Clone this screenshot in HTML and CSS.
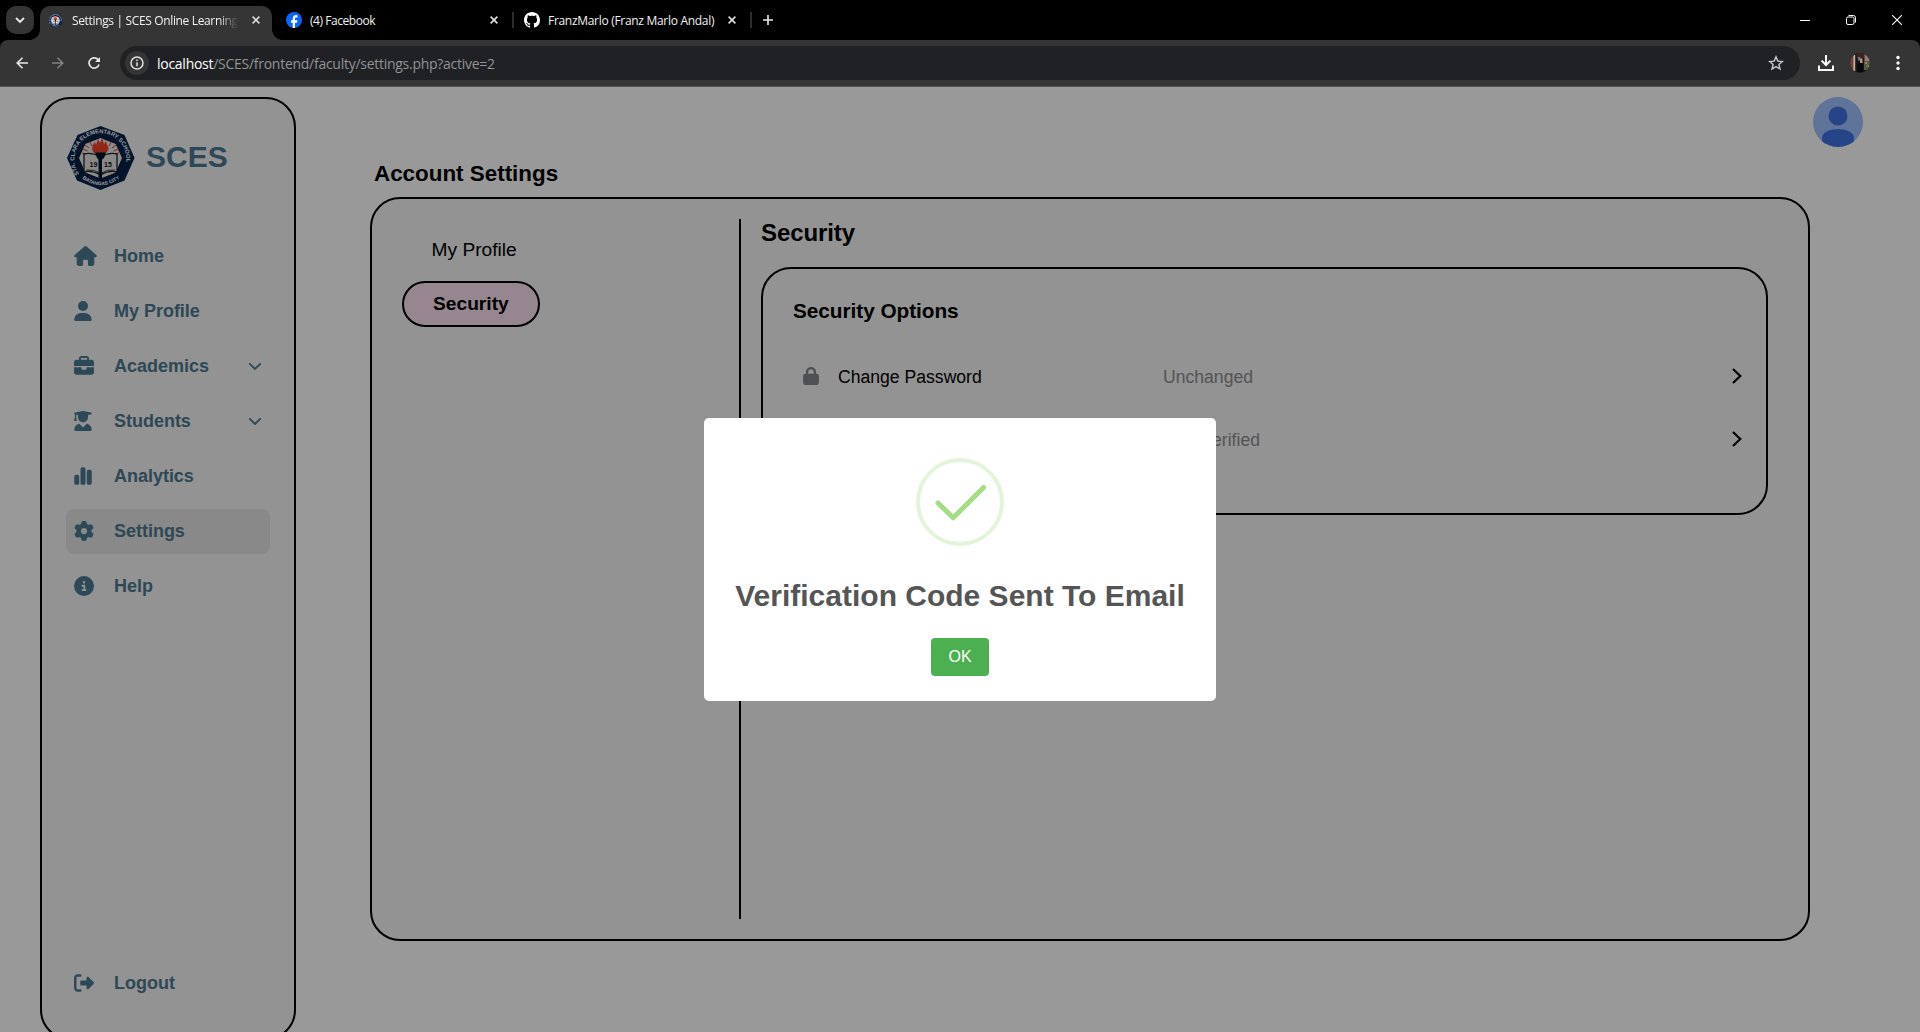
FILE: index.html
```html
<!DOCTYPE html>
<html lang="en">
<head>
<meta charset="utf-8">
<title>Settings | SCES Online Learning</title>
<link rel="stylesheet" href="styles.css">
</head>
<body>
<svg width="0" height="0" class="defs">
  <defs>
    <symbol id="close" viewBox="0 0 8 8"><path d="M.6.6l6.8 6.8M7.4.6L.6 7.4" stroke="#e3e3e3" stroke-width="1.5" fill="none"/></symbol>
    <symbol id="chev" viewBox="0 0 12 7"><path d="M.8.8L6 6 11.2.8" stroke="#4c788f" stroke-width="1.8" fill="none" stroke-linecap="round"/></symbol>
    <symbol id="next" viewBox="0 0 10 16"><path d="M1 1l7.3 7L1 15" stroke="#000" stroke-width="2.2" fill="none"/></symbol>
    <symbol id="seal" viewBox="0 0 68 64">
      <path d="M33.500 0L57.500 9 67.500 32 57.500 54.500 33.500 64 10 54.500 0 32 10.500 9z" fill="#04204a"/>
      <path d="M33.500 11.500L49 17.500 55.500 32 49 47 33.500 53 18 47 11.500 32 18 17.500z" fill="#e8e8e8" stroke="#06142b"/>
      <path d="M15 27l5 1M15.500 23l5 2M18 19l4 3M52 27l-5 1M51.500 23l-5 2M49 19l-4 3M23 16l2 4M44 16l-2 4" stroke="#e0402a" stroke-width="1"/>
      <path d="M17 28q8-2 16.500 3 8.500-5 16.500-3v18q-8-2-16.500 3-8.500-5-16.500-3z" fill="#e4e4e4" stroke="#222" stroke-width="1.300"/>
      <path d="M19 44q8-1 14.500 3.500 6.500-4.500 14.500-3.500" fill="none" stroke="#222" stroke-width=".9"/>
      <path d="M27 27c-3-4-2-8 1-11l1 3 2-6 2 4 2-5 2 6 2-3 1 4c3 3 1 6-1 8z" fill="#f04228"/>
      <path d="M28 26.500h11l-2 5.500-2 1.500V53h-3.500V33.500L30 32z" fill="#06142b"/>
      <text x="22.500" y="41" class="year">19</text><text x="37" y="41" class="year">15</text>
      <path id="arc1" d="M12 48A26 26 0 1 1 56 46" fill="none"/>
      <path id="arc2" d="M12 50Q33.500 68.500 56 50" fill="none"/>
      <text class="ring"><textPath href="#arc1">STA. CLARA ELEMENTARY SCHOOL</textPath></text>
      <text class="ring small"><textPath href="#arc2" startOffset="50%" text-anchor="middle">BATANGAS CITY</textPath></text>
    </symbol>
  </defs>
</svg>

<div class="browser">
  <div class="tabs">
    <div class="tab-search"><svg width="10" height="7" viewBox="0 0 10 7"><path d="M1 1l4 4 4-4" stroke="#e8e8e8" stroke-width="1.900" fill="none"/></svg></div>
    <div class="tab active">
      <svg class="fav" width="15" height="15" viewBox="0 0 68 64"><use href="#seal"/></svg>
      <span class="tab-title first">Settings | SCES Online Learning</span>
      <svg class="x" width="8" height="8"><use href="#close"/></svg>
    </div>
    <div class="tab fb">
      <svg class="fav" width="16" height="16" viewBox="0 0 16 16"><circle cx="8" cy="8" r="8" fill="#0866ff"/><path d="M6.700 16v-5.300H5V8.200h1.700V7c0-2.700 1.200-3.900 3.800-3.900l1 .1v2.300h-.9c-1.200 0-1.600.4-1.600 1.500v1.200h2.400L11 10.700H9V16z" fill="#fff"/></svg>
      <span class="tab-title">(4) Facebook</span>
      <svg class="x" width="8" height="8"><use href="#close"/></svg>
    </div>
    <i class="sep"></i>
    <div class="tab gh">
      <svg class="fav" width="16" height="16" viewBox="0 0 16 16"><path fill="#fff" d="M8 0C3.580 0 0 3.580 0 8c0 3.540 2.290 6.530 5.470 7.590.4.070.55-.17.55-.38 0-.19-.01-.82-.01-1.490-2.010.37-2.530-.49-2.690-.94-.09-.23-.48-.94-.82-1.130-.28-.15-.68-.52-.01-.53.63-.01 1.080.58 1.230.82.72 1.210 1.870.87 2.330.66.07-.52.28-.87.51-1.070-1.780-.2-3.640-.89-3.640-3.950 0-.87.31-1.590.82-2.150-.08-.2-.36-1.020.08-2.120 0 0 .67-.21 2.200.82.64-.18 1.320-.27 2-.27s1.360.09 2 .27c1.530-1.040 2.200-.82 2.200-.82.44 1.100.16 1.920.08 2.120.51.56.82 1.270.82 2.150 0 3.070-1.870 3.750-3.650 3.950.29.25.54.73.54 1.480 0 1.070-.01 1.930-.01 2.200 0 .21.15.46.55.38A8.010 8.010 0 0 0 16 8c0-4.420-3.580-8-8-8z"/></svg>
      <span class="tab-title third">FranzMarlo (Franz Marlo Andal)</span>
      <svg class="x" width="8" height="8"><use href="#close"/></svg>
    </div>
    <i class="sep"></i>
    <svg class="plus" width="10" height="10" viewBox="0 0 10 10"><path d="M5 0v10M0 5h10" stroke="#e8e8e8" stroke-width="1.600"/></svg>
    <div class="window-btns">
      <svg width="10" height="10" viewBox="0 0 10 10"><path d="M0 5.500h10" stroke="#fff"/></svg>
      <svg width="10" height="10" viewBox="0 0 10 10"><rect x=".5" y="2" width="7.500" height="7.500" rx="1.500" fill="none" stroke="#fff"/><path d="M2.500.5h5a2 2 0 0 1 2 2v5" fill="none" stroke="#fff"/></svg>
      <svg width="10" height="10" viewBox="0 0 10 10"><path d="M0 0l10 10M10 0L0 10" stroke="#fff" stroke-width="1.100"/></svg>
    </div>
  </div>
  <div class="toolbar">
    <svg class="nav-btn" width="12" height="12" viewBox="0 0 12 12"><path d="M12 6H1M6.500.7L1.200 6l5.300 5.300" fill="none" stroke="#e8e8e8" stroke-width="1.600"/></svg>
    <svg class="nav-btn" width="12" height="12" viewBox="0 0 12 12"><path d="M0 6h11M5.500.7L10.800 6l-5.300 5.300" fill="none" stroke="#818181" stroke-width="1.600"/></svg>
    <svg class="nav-btn" width="13" height="12" viewBox="0 0 13 12"><path d="M11 7.500A5.100 5.100 0 1 1 10.400 3.200" fill="none" stroke="#e8e8e8" stroke-width="1.700"/><path d="M12 0v5H7z" fill="#e8e8e8"/></svg>
    <div class="address">
      <span class="info"><svg width="14" height="14" viewBox="0 0 14 14"><circle cx="7" cy="7" r="6" fill="none" stroke="#e0e0e0" stroke-width="1.500"/><path d="M7 6.200v4M7 3.500v1.500" stroke="#e0e0e0" stroke-width="1.500"/></svg></span>
      <span class="url"><b>localhost</b>/SCES/frontend/faculty/settings.php?active=2</span>
      <svg class="star" width="16" height="16" viewBox="0 0 16 16"><path d="M8 1.800l1.800 4.300 4.600.4-3.500 3 1.100 4.500L8 11.600 4 14l1.100-4.500-3.500-3 4.600-.4z" fill="none" stroke="#c8c8c8" stroke-width="1.400"/></svg>
    </div>
    <svg class="dl" width="16" height="16" viewBox="0 0 16 16"><path d="M8 0v9.500M3.600 5.600L8 10l4.400-4.400M1 10.500V15h14v-4.500" fill="none" stroke="#fff" stroke-width="2"/></svg>
    <svg class="me" width="20" height="20" viewBox="0 0 20 20"><clipPath id="round"><circle cx="10" cy="10" r="10"/></clipPath><g clip-path="url(#round)"><path d="M0 0h20v20H0z" fill="#1c1514"/><path d="M0 0h3v20H0z" fill="#7a4038"/><path d="M3.300 2h1.900v16H3.300z" fill="#c4b4a8"/><path d="M6.500 0h8v5h-8z" fill="#43241c"/><path d="M8 4h2.200v3.500H8z" fill="#4a80b0"/><path d="M10 5.500h2.500v5H10z" fill="#c89070"/><path d="M14.500 0H20v8h-5.500z" fill="#8d8078"/><path d="M14 8h6v9h-6z" fill="#5b5b42"/><path d="M15 9h2v2h-2zM17.500 12H19v2h-1.500z" fill="#85866a"/><path d="M7.500 10h5.500v9H7.500z" fill="#070910"/></g></svg>
    <svg class="dots" width="4" height="16" viewBox="0 0 4 16"><g fill="#fff"><circle cx="2" cy="2.500" r="1.700"/><circle cx="2" cy="8" r="1.700"/><circle cx="2" cy="13.500" r="1.700"/></g></svg>
  </div>
</div>

<div class="page">
  <aside class="sidebar">
    <div class="brand"><svg width="68" height="64"><use href="#seal"/></svg><span>SCES</span></div>
    <nav class="menu">
      <a><svg width="23" height="20" viewBox="0 0 576 512"><path d="M575.800 255.500c0 18-15 32.100-32 32.100h-32l.7 160.200c0 35.300-21 64.200-56.500 64.200H392c-22.100 0-40-17.900-40-40V384c0-17.700-14.300-32-32-32h-64c-17.700 0-32 14.300-32 32v88c0 22.100-17.900 40-40 40h-64c-35 0-56-29-56-64V287.600H32c-18 0-32-14-32-32.100 0-9 3-17 10-24L266.400 8c7-7 15-8 22-8s15 2 21 7L564.800 231.500c8 7 12 15 11 24z"/></svg><span>Home</span></a>
      <a><svg width="18" height="20" viewBox="0 0 448 512"><path d="M224 256a128 128 0 1 0 0-256 128 128 0 1 0 0 256zm-45.700 48C79.800 304 0 383.800 0 482.300 0 498.700 13.300 512 29.700 512h388.600c16.400 0 29.700-13.300 29.700-29.700C448 383.800 368.200 304 269.700 304z"/></svg><span>My Profile</span></a>
      <a><svg width="20" height="20" viewBox="0 0 512 512"><path d="M184 48h144c4.400 0 8 3.600 8 8v40H176V56c0-4.400 3.600-8 8-8zm-56 8v40H64c-35.300 0-64 28.700-64 64v96h512v-96c0-35.300-28.700-64-64-64h-64V56c0-30.900-25.100-56-56-56H184c-30.900 0-56 25.100-56 56zm384 232H320v32c0 17.700-14.300 32-32 32h-64c-17.700 0-32-14.300-32-32v-32H0v128c0 35.300 28.700 64 64 64h384c35.300 0 64-28.700 64-64z"/></svg><span>Academics</span><svg class="chev" width="12" height="7"><use href="#chev"/></svg></a>
      <a><svg width="18" height="20" viewBox="0 0 448 512"><path d="M219.300.5c3.100-.6 6.300-.6 9.400 0l200 40C439.900 42.700 448 52.600 448 64s-8.100 21.300-19.300 23.500L352 102.900V160c0 70.700-57.300 128-128 128S96 230.700 96 160v-57.100L48 93.300v65.100l15.700 78.400c.9 4.700-.3 9.600-3.300 13.300S52.800 256 48 256H16c-4.800 0-9.300-2.100-12.400-5.900s-4.300-8.600-3.300-13.300L16 158.400V86.600C6.500 83.300 0 74.300 0 64 0 52.600 8.100 42.700 19.300 40.500zM111.900 327.700c10.500-3.400 21.800.4 29.400 8.500l71 75.500c6.300 6.700 17 6.700 23.300 0l71-75.500c7.600-8.100 18.900-11.900 29.400-8.500C401 348.600 448 409.400 448 481.300c0 17-13.800 30.700-30.700 30.700H30.700C13.800 512 0 498.200 0 481.300c0-71.900 47-132.700 111.900-153.600z"/></svg><span>Students</span><svg class="chev" width="12" height="7"><use href="#chev"/></svg></a>
      <a><svg width="18" height="20" viewBox="0 0 448 512"><path d="M160 80c0-26.500 21.500-48 48-48h32c26.500 0 48 21.500 48 48v352c0 26.500-21.500 48-48 48h-32c-26.500 0-48-21.500-48-48zM0 272c0-26.500 21.500-48 48-48h32c26.500 0 48 21.500 48 48v160c0 26.500-21.500 48-48 48H48c-26.500 0-48-21.500-48-48zM368 96h32c26.500 0 48 21.500 48 48v288c0 26.500-21.500 48-48 48h-32c-26.500 0-48-21.500-48-48V144c0-26.500 21.500-48 48-48z"/></svg><span>Analytics</span></a>
      <a class="on"><svg width="20" height="20" viewBox="0 0 512 512"><path d="M495.900 166.600c3.200 8.700.5 18.400-6.400 24.600l-43.300 39.400c1.100 8.300 1.700 16.800 1.700 25.400s-.6 17.100-1.700 25.400l43.300 39.400c6.900 6.200 9.600 15.900 6.400 24.600-4.400 11.900-9.700 23.300-15.800 34.300l-4.700 8.100c-6.600 11-14 21.400-22.100 31.200-5.900 7.200-15.700 9.600-24.500 6.800l-55.700-17.700c-13.400 10.300-28.200 18.900-44 25.400l-12.500 57.100c-2 9.100-9 16.300-18.200 17.800-13.800 2.300-28 3.500-42.500 3.500s-28.700-1.200-42.500-3.500c-9.200-1.500-16.200-8.700-18.200-17.800l-12.500-57.100c-15.800-6.500-30.600-15.100-44-25.400l-55.600 17.800c-8.800 2.800-18.600.3-24.500-6.800-8.100-9.800-15.500-20.200-22.100-31.200l-4.700-8.100c-6.100-11-11.400-22.400-15.800-34.300-3.200-8.700-.5-18.400 6.400-24.600l43.300-39.400C64.600 273.100 64 264.600 64 256s.6-17.100 1.700-25.400l-43.300-39.400c-6.900-6.200-9.600-15.900-6.400-24.600 4.400-11.900 9.700-23.300 15.800-34.300l4.700-8.100c6.600-11 14-21.400 22.100-31.200 5.900-7.200 15.700-9.600 24.500-6.800l55.700 17.700c13.400-10.300 28.200-18.900 44-25.400l12.500-57.100c2-9.100 9-16.300 18.200-17.800C227.300 1.200 241.500 0 256 0s28.700 1.200 42.500 3.500c9.200 1.500 16.200 8.700 18.200 17.800l12.500 57.100c15.800 6.500 30.600 15.100 44 25.400l55.700-17.700c8.800-2.800 18.600-.3 24.500 6.800 8.100 9.800 15.500 20.200 22.100 31.200l4.700 8.100c6.100 11 11.400 22.400 15.800 34.300zM256 336a80 80 0 1 0 0-160 80 80 0 1 0 0 160z"/></svg><span>Settings</span></a>
      <a><svg width="20" height="20" viewBox="0 0 512 512"><path fill-rule="evenodd" d="M256 512a256 256 0 1 0 0-512 256 256 0 1 0 0 512zm-40-176h24v-64h-24c-13.300 0-24-10.700-24-24s10.700-24 24-24h48c13.300 0 24 10.700 24 24v88h8c13.300 0 24 10.700 24 24s-10.700 24-24 24h-80c-13.300 0-24-10.700-24-24s10.700-24 24-24zm40-208a32 32 0 1 1 0 64 32 32 0 1 1 0-64z"/></svg><span>Help</span></a>
      <a class="logout"><svg width="20" height="20" viewBox="0 0 512 512"><path d="M377.900 105.900l122.800 122.800c7.200 7.200 11.300 17.100 11.300 27.300s-4.100 20.100-11.300 27.300L377.900 406.100c-6.400 6.400-15 9.900-24 9.900-18.700 0-33.900-15.200-33.900-33.900V320H192c-17.700 0-32-14.300-32-32v-64c0-17.700 14.300-32 32-32h128v-62.100c0-18.700 15.200-33.900 33.900-33.900 9 0 17.600 3.600 24 9.900zM160 96H96c-17.700 0-32 14.300-32 32v256c0 17.700 14.300 32 32 32h64c17.700 0 32 14.300 32 32s-14.300 32-32 32H96c-53 0-96-43-96-96V128c0-53 43-96 96-96h64c17.700 0 32 14.300 32 32s-14.300 32-32 32z"/></svg><span>Logout</span></a>
    </nav>
  </aside>

  <main class="main">
    <header class="topbar"><svg width="50" height="50" viewBox="0 0 50 50"><clipPath id="av"><circle cx="25" cy="25" r="25"/></clipPath><g clip-path="url(#av)"><path d="M0 0h50v50H0z" fill="#a0c0ff"/><circle cx="25" cy="19" r="9.500" fill="#4073e4"/><path d="M9 50v-9c0-5.500 7-9 16-9s16 3.500 16 9v9z" fill="#4073e4"/></g></svg></header>
    <h1>Account Settings</h1>
    <section class="panel">
      <div class="subnav"><a>My Profile</a><a class="current">Security</a></div>
      <div class="content">
        <h2>Security</h2>
        <div class="card">
          <h3>Security Options</h3>
          <div class="row"><svg width="16" height="18" viewBox="0 0 448 512"><path d="M144 144v48h160v-48c0-44.200-35.800-80-80-80s-80 35.800-80 80zm-64 48v-48C80 64.500 144.500 0 224 0s144 64.500 144 144v48h16c35.300 0 64 28.700 64 64v192c0 35.300-28.700 64-64 64H64c-35.300 0-64-28.700-64-64V256c0-35.300 28.700-64 64-64z" fill="#80858c"/></svg><span>Change Password</span><em>Unchanged</em><svg width="10" height="16"><use href="#next"/></svg></div>
          <div class="row"><i></i><span></span><em class="spaced">Not Verified</em><svg width="10" height="16"><use href="#next"/></svg></div>
        </div>
      </div>
    </section>
  </main>

  <div class="overlay">
    <div class="modal">
      <svg width="88" height="88" viewBox="0 0 88 88"><circle cx="44" cy="44" r="42" fill="none" stroke="#e4f4da" stroke-width="4"/><path d="M22 45L37.200 59.800 67.600 29.400" fill="none" stroke="#a5dc86" stroke-width="5" stroke-linecap="round" stroke-linejoin="round"/></svg>
      <div class="modal-title">Verification Code Sent To Email</div>
      <button>OK</button>
    </div>
  </div>
</div>
</body>
</html>
```
FILE: styles.css
```css
* { box-sizing: border-box; }
body { margin: 0; height: 1032px; overflow: hidden; background: #fff; font-family: "Liberation Sans", Arial, sans-serif; display: flex; flex-direction: column; }
svg { display: block; flex: none; }
.defs { position: absolute; }
.year { font: bold 7px "Liberation Sans", sans-serif; fill: #111; }
.ring { font: bold 5.7px "Liberation Sans", sans-serif; fill: #fff; }
.ring.small { font-size: 5px; }

/* Browser window */
.browser { flex: none; height: 87px; background: #000; font-family: "Open Sans", "Noto Sans", sans-serif; border-bottom: 1px solid #565656; }
.tabs { height: 40px; display: flex; align-items: center; padding-left: 6px; }
.tab-search { width: 28px; height: 28px; border-radius: 10px; background: #353535; display: flex; align-items: center; justify-content: center; }
.tab { height: 34px; margin-top: 6px; display: flex; align-items: center; padding-bottom: 6px; color: #f1f1f1; font-size: 12px; white-space: nowrap; }
.tab.active { width: 232px; margin-left: 6px; padding-left: 8px; border-radius: 10px 10px 0 0; background: #353535; position: relative; }
.tab.active::before, .tab.active::after { content: ""; position: absolute; bottom: 0; width: 10px; height: 10px; }
.tab.active::before { left: -10px; background: radial-gradient(circle at 0 0, transparent 9.5px, #353535 10px); }
.tab.active::after { right: -10px; background: radial-gradient(circle at 100% 0, transparent 9.5px, #353535 10px); }
.tab-title { margin-left: 8px; letter-spacing: -.3px; }
.tab-title.first { margin-left: 9px; width: 166px; overflow: hidden; letter-spacing: -.35px; -webkit-mask-image: linear-gradient(to right, #000 88%, transparent); mask-image: linear-gradient(to right, #000 88%, transparent); }
.tab .x { margin-left: auto; }
.tab.active .x { margin-right: 12px; }
.tab.fb { width: 226px; padding-left: 14px; padding-right: 14px; margin-right: 2px; }
.tab.fb .x { margin-right: -14px; }
.tab.fb .tab-title { letter-spacing: -.45px; }
.sep { width: 2px; height: 16px; background: #2d2d2d; margin-left: 12px; }
.tab.gh { width: 212px; margin-left: 10px; }
.tab.gh .x { margin-right: 0; }
.tab.gh + .sep { margin-left: 14px; }
.plus { margin-left: 11px; }
.window-btns { margin-left: auto; margin-right: 18px; display: flex; gap: 36px; }
.toolbar { height: 46px; background: #353535; border-radius: 8px 8px 0 0; display: flex; align-items: center; padding: 0 20px 0 16px; }
.nav-btn { margin-right: 24px; }
.nav-btn + .nav-btn + .nav-btn { margin-right: 19px; }
.address { width: 1680px; height: 34px; border-radius: 17px; background: #202124; display: flex; align-items: center; padding: 0 16px 0 5px; }
.info { width: 24px; height: 24px; border-radius: 50%; background: #353535; display: flex; align-items: center; justify-content: center; }
.url { margin-left: 8px; font-size: 14px; letter-spacing: -.27px; color: #929395; white-space: nowrap; }
.url b { font-weight: 400; color: #fff; }
.star { margin-left: auto; }
.dl { margin-left: 18px; }
.me { margin-left: 16px; }
.dots { margin-left: auto; }

/* Application */
.page { flex: 1; position: relative; display: flex; align-items: flex-start; padding: 10px 0 0 40px; overflow: hidden; }
.sidebar { flex: none; width: 256px; height: 943px; border: 2px solid #000; border-radius: 30px; background: #f5f5f5; padding: 27px 24px 32px; display: flex; flex-direction: column; }
.brand { flex: none; height: 89px; padding-left: 1px; border-bottom: 1px solid #f3f3f3; display: flex; gap: 11px; color: #4c788f; font-weight: 700; font-size: 30px; line-height: 62px; }
.menu { flex: 1; display: flex; flex-direction: column; gap: 10px; padding-top: 19px; }
.menu a { flex: none; height: 45px; padding: 0 9px 0 8px; display: grid; grid-template-columns: 40px 1fr 12px; align-items: center; border-radius: 8px; color: #4c788f; font-size: 18px; font-weight: 700; }
.menu a > svg { fill: #4c788f; }
.menu a > svg:first-child { margin-top: -1px; }
.menu a > span { letter-spacing: -.02px; }
.menu a.on { background: #e4e4e4; }
.menu a.logout { margin-top: auto; }
.main { flex: none; width: 1440px; margin-left: 74px; display: flex; flex-direction: column; }
.topbar { height: 50px; display: flex; justify-content: flex-end; margin-right: -53px; }
h1, h2, h3 { margin: 0; font-weight: 700; }
h1 { font-size: 22.4px; line-height: 26px; height: 50px; padding: 14px 0 0 4px; }
.panel { height: 744px; border: 2px solid #000; border-radius: 30px; background: #f5f5f5; display: flex; padding: 20px 40px 20px 30px; }
.subnav { width: 339px; height: 700px; border-right: 2px solid #000; font-size: 19.2px; display: flex; flex-direction: column; align-items: flex-start; padding-top: 20px; }
.subnav a { padding: 0 29.500px; line-height: 22px; border: 0 solid #000; }
.subnav a.current { margin-top: 20px; height: 46px; line-height: 41px; border-width: 2px; border-radius: 23px; padding: 0 29px; background: #fae0f0; font-weight: 700; }
.content { margin-left: 20px; width: 1007px; }
h2 { font-size: 24px; line-height: 28px; height: 48px; letter-spacing: -.1px; }
.card { height: 248px; border: 2px solid #000; border-radius: 30px; padding: 30px 24px 0 30px; }
h3 { font-size: 20.8px; line-height: 24px; height: 46px; letter-spacing: -.05px; }
.row { height: 63px; display: grid; grid-template-columns: 35.500px 325px 1fr 10px; align-items: center; padding-left: 9.500px; font-size: 17.6px; }
.row span, .row em { padding-top: 2px; }
.row svg { margin-top: -1px; }
.row em { font-style: normal; color: #8d8d8d; }
.row em.spaced { word-spacing: 6px; }

/* Confirmation dialog */
.overlay { position: absolute; inset: 0; background: rgba(0, 0, 0, .4); display: flex; justify-content: center; align-items: center; }
.modal { width: 512px; height: 283px; background: #fff; border-radius: 5px; display: flex; flex-direction: column; align-items: center; padding-top: 40px; }
.modal-title { margin-top: 33px; line-height: 34px; font-size: 30px; font-weight: 700; color: #555; white-space: nowrap; }
.modal button { margin-top: 25px; width: 58px; height: 38px; border: 0; border-radius: 4px; background: #4caf50; color: #fff; font: 16px "Liberation Sans", Arial, sans-serif; padding: 0; }
```
